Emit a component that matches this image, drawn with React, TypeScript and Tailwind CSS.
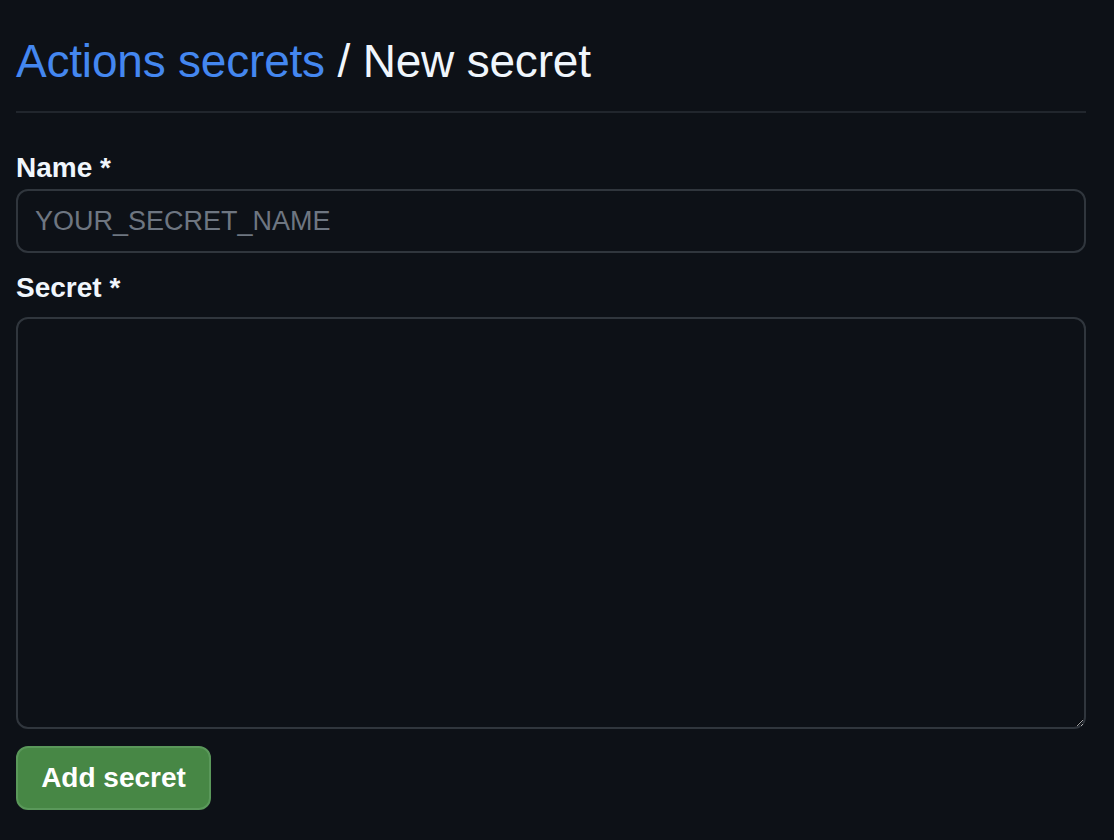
export default function App() {
  return (
    <div className="min-h-[840px] w-full bg-[#0d1117] font-['Liberation_Sans',Arial,sans-serif]">
      <div className="pl-[16px] pr-[28px] pt-[25px]">
        <div className="border-b-2 border-[#21262d] pb-[14px]">
          <h2 className="text-[46px] leading-[72px] font-normal tracking-[-0.2px] text-[#f0f6fc]">
            <a href="#" className="text-[#4487f0]">Actions secrets</a> / New secret
          </h2>
        </div>

        <form className="flex flex-col">
          <label htmlFor="secret_name" className="mt-[34px] block text-[28px] leading-[42px] font-bold text-[#f0f6fc]">
            Name *
          </label>
          <input
            id="secret_name"
            type="text"
            placeholder="YOUR_SECRET_NAME"
            className="h-[64px] w-full rounded-[12px] border-2 border-[#30363d] bg-[#0d1117] px-[17px] text-[27px] text-[#f0f6fc] outline-none placeholder:text-[#6e7681]"
          />

          <label htmlFor="secret_value" className="mt-[14px] block text-[28px] leading-[42px] font-bold text-[#f0f6fc]">
            Secret *
          </label>
          <textarea
            id="secret_value"
            className="mt-[8px] h-[412px] w-full rounded-[12px] border-2 border-[#30363d] bg-[#0d1117] px-[17px] py-[10px] text-[28px] text-[#f0f6fc] outline-none [color-scheme:dark]"
          />

          <div className="mt-[17px]">
            <button
              type="button"
              className="h-[64px] w-[195px] rounded-[12px] border-2 border-[#5a985a] bg-[#478745] text-[28px] font-bold text-white"
            >
              Add secret
            </button>
          </div>
        </form>
      </div>
    </div>
  );
}
